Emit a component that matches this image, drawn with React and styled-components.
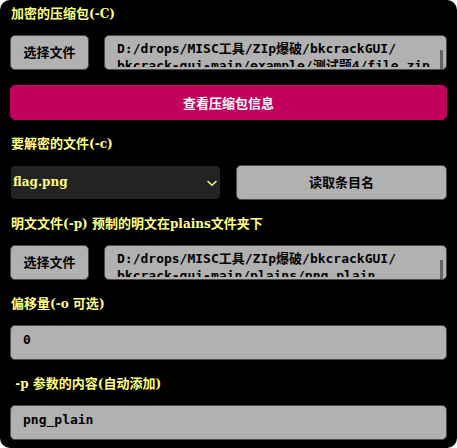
import React from "react";
import styled, { createGlobalStyle, css } from "styled-components";

const GlobalStyle = createGlobalStyle`
  *, *::before, *::after { box-sizing: border-box; }
  body { margin: 0; background: #fff; }
`;

const serif = `"DejaVu Serif", "Noto Sans CJK SC", serif`;
const cjk = `"Noto Sans CJK SC", sans-serif`;
const mono = `"DejaVu Sans Mono", "Noto Sans CJK SC", monospace`;

const greyBox = css`
  border: 1px solid #4a4a4a;
  border-radius: 5px;
  background: #b1b1b1;
  color: #000;
`;

const Panel = styled.form`
  display: flex;
  flex-direction: column;
  gap: 15px;
  padding: 5px 10px 8px;
  border-radius: 10px;
  background: #000;
`;

const Label = styled.label`
  padding-left: 1px;
  font: bold 13px/15px ${cjk};
  color: #ffff7f;
  white-space: pre;
`;

const Latin = styled.span`
  font-family: ${serif};
  font-size: 12px;
  line-height: 1;
`;

const FileRow = styled.div`
  display: grid;
  grid-template-columns: 79px 1fr;
  gap: 15px;
`;

const SplitRow = styled.div`
  display: grid;
  grid-template-columns: 1fr 1fr;
  gap: 15px;
`;

const Button = styled.button`
  ${greyBox}
  height: 35px;
  padding: 0 0 2px;
  font: bold 13px/15px ${cjk};
  cursor: pointer;
`;

const PrimaryButton = styled(Button)`
  padding: 0;
  border-color: #c4005f;
  background: #c4005f;
  color: #fff;
`;

const PathBox = styled.div`
  ${greyBox}
  position: relative;
  height: 35px;
  padding-bottom: 2px;
  overflow: hidden;
`;

const PathText = styled.textarea`
  display: block;
  width: 100%;
  height: 31px;
  padding: 4px 8px 0 12px;
  border: 0;
  outline: 0;
  resize: none;
  overflow: hidden;
  background: transparent;
  color: #000;
  font: bold 13px/17px ${mono};
`;

const ScrollThumb = styled.span`
  position: absolute;
  right: 3px;
  top: 14px;
  bottom: 0;
  width: 3px;
  background: #646464;
`;

const TextInput = styled.input`
  ${greyBox}
  width: 100%;
  height: 35px;
  padding: 0 12px 6px;
  outline: 0;
  font: bold 13px/17px ${mono};
`;

const SelectBox = styled.div`
  position: relative;
`;

const Select = styled.select`
  appearance: none;
  width: 100%;
  height: 35px;
  padding: 0 24px 0 2px;
  border: 1px solid #000;
  border-radius: 5px;
  background: #232323;
  color: #ffff7f;
  font: bold 12px/15px ${serif};
`;

const Chevron = styled.svg`
  position: absolute;
  right: 4px;
  top: 15px;
  width: 10px;
  height: 7px;
  pointer-events: none;
`;

function PathField({ id, folder, file }) {
  return (
    <FileRow>
      <Button type="button">选择文件</Button>
      <PathBox>
        <PathText id={id} defaultValue={`${folder}\n${file}`} spellCheck={false} />
        <ScrollThumb />
      </PathBox>
    </FileRow>
  );
}

export default function App() {
  return (
    <>
      <GlobalStyle />
      <Panel>
        <Label htmlFor="archive">加密的压缩包<Latin>(-C)</Latin></Label>
        <PathField
          id="archive"
          folder="D:/drops/MISC工具/ZIp爆破/bkcrackGUI/"
          file="bkcrack-gui-main/example/测试题4/file.zip"
        />
        <PrimaryButton type="button">查看压缩包信息</PrimaryButton>

        <Label htmlFor="entry">要解密的文件<Latin>(-c)</Latin></Label>
        <SplitRow>
          <SelectBox>
            <Select id="entry" defaultValue="flag.png">
              <option>flag.png</option>
            </Select>
            <Chevron viewBox="0 0 10 7" aria-hidden="true">
              <path
                d="M0.5 1 L5 5.2 L9.5 1"
                fill="none"
                stroke="#ffff7f"
                strokeWidth="1.5"
                strokeLinejoin="round"
              />
            </Chevron>
          </SelectBox>
          <Button type="button">读取条目名</Button>
        </SplitRow>

        <Label htmlFor="plain">
          明文文件<Latin>(-p) </Latin>预制的明文在<Latin>plains</Latin>文件夹下
        </Label>
        <PathField
          id="plain"
          folder="D:/drops/MISC工具/ZIp爆破/bkcrackGUI/"
          file="bkcrack-gui-main/plains/png_plain"
        />

        <Label htmlFor="offset">偏移量<Latin>(-o </Latin>可选<Latin>)</Latin></Label>
        <TextInput id="offset" defaultValue="0" />

        <Label htmlFor="content">
          <Latin> -p </Latin>参数的内容<Latin>(</Latin>自动添加<Latin>)</Latin>
        </Label>
        <TextInput id="content" defaultValue="png_plain" />
      </Panel>
    </>
  );
}
